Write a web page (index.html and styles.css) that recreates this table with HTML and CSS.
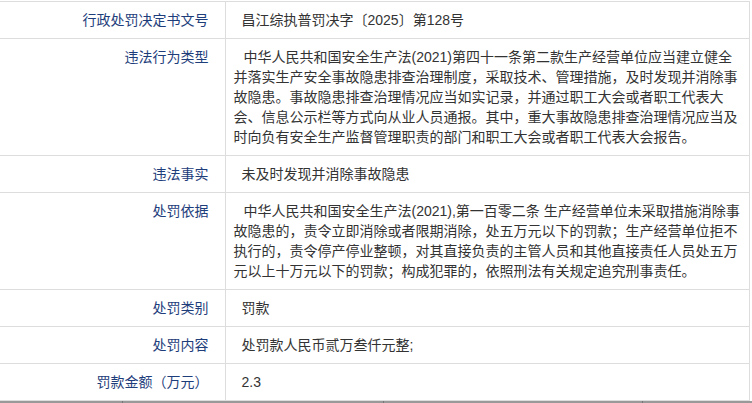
FILE: index.html
```html
<!DOCTYPE html>
<html>
  <head>
    <title>行政处罚信息</title>
    <meta charset="utf-8" />
    <link rel="stylesheet" href="styles.css">
  </head>
  <body>
    <div class="wrap">
      <table class="info">
        <colgroup>
          <col class="col-label">
          <col class="col-value">
        </colgroup>
        <tr>
          <td class="label">行政处罚决定书文号</td>
          <td class="value single">昌江综执普罚决字〔2025〕第128号</td>
        </tr>
        <tr>
          <td class="label">违法行为类型</td>
          <td class="value multi">中华人民共和国安全生产法(2021)第四十一条第二款生产经营单位应当建立健全并落实生产安全事故隐患排查治理制度，采取技术、管理措施，及时发现并消除事故隐患。事故隐患排查治理情况应当如实记录，并通过职工大会或者职工代表大会、信息公示栏等方式向从业人员通报。其中，重大事故隐患排查治理情况应当及时向负有安全生产监督管理职责的部门和职工大会或者职工代表大会报告。</td>
        </tr>
        <tr>
          <td class="label">违法事实</td>
          <td class="value single">未及时发现并消除事故隐患</td>
        </tr>
        <tr>
          <td class="label">处罚依据</td>
          <td class="value multi">中华人民共和国安全生产法(2021),第一百零二条 生产经营单位未采取措施消除事故隐患的，责令立即消除或者限期消除，处五万元以下的罚款；生产经营单位拒不执行的，责令停产停业整顿，对其直接负责的主管人员和其他直接责任人员处五万元以上十万元以下的罚款；构成犯罪的，依照刑法有关规定追究刑事责任。</td>
        </tr>
        <tr>
          <td class="label">处罚类别</td>
          <td class="value single">罚款</td>
        </tr>
        <tr>
          <td class="label">处罚内容</td>
          <td class="value single">处罚款人民币贰万叁仟元整;</td>
        </tr>
        <tr>
          <td class="label">罚款金额（万元）</td>
          <td class="value single">2.3</td>
        </tr>
      </table>
      <div class="bottom-bar">
        <span></span><span></span><span></span>
      </div>
    </div>
  </body>
</html>
```

FILE: styles.css
```css
* {
  padding: 0;
  margin: 0;
  box-sizing: border-box;
}
body {
  font-family: "Liberation Sans", "Noto Sans CJK SC", sans-serif;
  font-size: 14px;
  line-height: 20px;
  color: #333;
  background: #fff;
}
.wrap {
  width: 752px;
  padding-top: 1px;
}
.info {
  width: 750px;
  border-collapse: collapse;
  table-layout: fixed;
  font-size: 14px;
}
.col-label {
  width: 225px;
}
.info td {
  border: 1px solid #ddd;
  padding: 8px;
  vertical-align: top;
}
.info td.label {
  border-left: none;
  text-align: right;
  padding-right: 16px;
  color: #1e3d7b;
}
.value.single {
  padding-left: 16px;
}
.value.multi {
  text-indent: 10px;
}
.bottom-bar {
  height: 3px;
  background: #999;
  display: flex;
}
.bottom-bar span {
  width: 1px;
  background: #777;
}
.bottom-bar span:nth-child(1) {
  margin-left: 122px;
}
.bottom-bar span:nth-child(2) {
  margin-left: 260px;
}
.bottom-bar span:nth-child(3) {
  margin-left: 258px;
}
```
